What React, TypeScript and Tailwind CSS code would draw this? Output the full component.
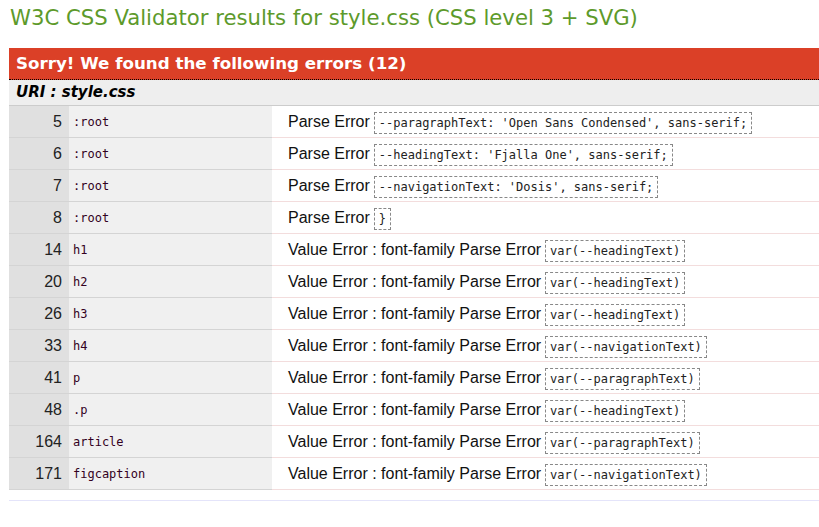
import React from "react";

const rows: { line: number; sel: string; msg: string; code: string }[] = [
  { line: 5, sel: ":root", msg: "Parse Error", code: "--paragraphText: 'Open Sans Condensed', sans-serif;" },
  { line: 6, sel: ":root", msg: "Parse Error", code: "--headingText: 'Fjalla One', sans-serif;" },
  { line: 7, sel: ":root", msg: "Parse Error", code: "--navigationText: 'Dosis', sans-serif;" },
  { line: 8, sel: ":root", msg: "Parse Error", code: "}" },
  { line: 14, sel: "h1", msg: "Value Error : font-family Parse Error", code: "var(--headingText)" },
  { line: 20, sel: "h2", msg: "Value Error : font-family Parse Error", code: "var(--headingText)" },
  { line: 26, sel: "h3", msg: "Value Error : font-family Parse Error", code: "var(--headingText)" },
  { line: 33, sel: "h4", msg: "Value Error : font-family Parse Error", code: "var(--navigationText)" },
  { line: 41, sel: "p", msg: "Value Error : font-family Parse Error", code: "var(--paragraphText)" },
  { line: 48, sel: ".p", msg: "Value Error : font-family Parse Error", code: "var(--headingText)" },
  { line: 164, sel: "article", msg: "Value Error : font-family Parse Error", code: "var(--paragraphText)" },
  { line: 171, sel: "figcaption", msg: "Value Error : font-family Parse Error", code: "var(--navigationText)" },
];

export default function App() {
  return (
    <div className="w-[819px] h-[527px] overflow-hidden bg-white">
      <h2 className="pl-[10px] pt-[3px] h-[48px] text-[21.2px] leading-[30px] text-[#5d9a2b] font-['DejaVu_Sans',sans-serif]">
        W3C CSS Validator results for style.css (CSS level 3 + SVG)
      </h2>
      <div className="ml-[9px]">
        <div className="h-[32px] bg-[#db4027] border-b border-dotted border-black pl-[7px] text-white font-bold text-[16.7px] leading-[31px] font-['DejaVu_Sans',sans-serif]">
          Sorry! We found the following errors (12)
        </div>
        <div className="h-[26px] bg-[#eeeeee] border-b border-[#cccccc] pl-[7px] text-black font-bold italic text-[15px] leading-[25px] font-['DejaVu_Sans',sans-serif]">
          URI : style.css
        </div>
        {rows.map((r) => (
          <div key={r.line} className="flex h-[32px]">
            <div className="w-[60px] shrink-0 bg-[#e0e0e0] border-b border-[#d4d4d4] pr-[7px] text-right text-[16px] leading-[31px] text-[#222] font-['Liberation_Sans',sans-serif]">
              {r.line}
            </div>
            <div className="w-[203px] shrink-0 bg-[#f0f0f0] border-b border-[#d4d4d4] pl-[4px] pt-[2px] text-[12px] leading-[29px] text-[#330022] font-['DejaVu_Sans_Mono',monospace]">
              {r.sel}
            </div>
            <div className="flex-1 flex items-center border-b border-[#f3dddd] pl-[16px] text-[16px] text-[#111] font-['Liberation_Sans',sans-serif]">
              <span className="mr-[4px]">{r.msg}</span>
              <span className="border border-dashed border-[#888] px-[4px] h-[22px] leading-[20px] mt-[3px] text-[12px] text-[#222] font-['DejaVu_Sans_Mono',monospace] whitespace-pre">
                {r.code}
              </span>
            </div>
          </div>
        ))}
        <div className="h-[10px]" />
        <div className="h-[1px] bg-[#e4e4fa]" />
      </div>
    </div>
  );
}
